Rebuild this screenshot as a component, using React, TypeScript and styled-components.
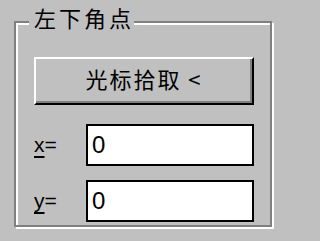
import React from "react"
import styled, { createGlobalStyle } from "styled-components"

const GlobalStyle = createGlobalStyle`
  html, body {
    margin: 0;
    background: #c0c0c0;
  }
`

const Window = styled.div`
  box-sizing: border-box;
  width: 286px;
  height: 241px;
  padding: 3px 0 0 14px;
  background: #c0c0c0;
  overflow: hidden;
`

const Group = styled.fieldset`
  box-sizing: border-box;
  width: 258px;
  min-width: 0;
  margin: 0;
  padding: 16px 16px 3px 18px;
  border: 2px solid #808080;
  box-shadow: inset 2px 2px 0 #ffffff, 2px 2px 0 #ffffff;
`

const Caption = styled.legend`
  margin-left: -5px;
  padding: 0 0 10px 5px;
  background: #c0c0c0;
  color: #000;
  font: 22px/28px "Noto Sans CJK SC", sans-serif;
  letter-spacing: 3px;
`

const PickButton = styled.button`
  box-sizing: border-box;
  display: flex;
  align-items: center;
  justify-content: center;
  width: 220px;
  height: 48px;
  margin: 0 0 19px;
  padding: 0 0 6px;
  background: #c0c0c0;
  border: 2px solid;
  border-color: #ffffff #000000 #000000 #ffffff;
  box-shadow: inset -2px -2px 0 #808080;
  color: #000;
  font: 22px "Noto Sans CJK SC", sans-serif;
  letter-spacing: 2px;
`

const Field = styled.label`
  display: grid;
  grid-template-columns: 52px 168px;
  align-items: center;

  & + & {
    margin-top: 14px;
  }
`

const Key = styled.span`
  color: #000;
  font: 21px "Liberation Sans", Arial, sans-serif;
`

const Accel = styled.span`
  text-decoration: underline;
  text-decoration-thickness: 2px;
  text-underline-offset: 4px;
`

const Entry = styled.input`
  box-sizing: border-box;
  width: 168px;
  height: 42px;
  margin: 0;
  padding: 0 4px;
  border: 2px solid #000;
  outline: none;
  background: #fff;
  color: #000;
  font: 24px "Liberation Sans", Arial, sans-serif;
`

const fields = [
  { key: "x", value: "0" },
  { key: "y", value: "0" },
]

export default function App() {
  return (
    <Window>
      <GlobalStyle />
      <Group>
        <Caption>左下角点</Caption>
        <PickButton type="button">光标拾取 &lt;</PickButton>
        {fields.map(f => (
          <Field key={f.key}>
            <Key>
              <Accel>{f.key}</Accel>=
            </Key>
            <Entry type="text" defaultValue={f.value} readOnly />
          </Field>
        ))}
      </Group>
    </Window>
  )
}
